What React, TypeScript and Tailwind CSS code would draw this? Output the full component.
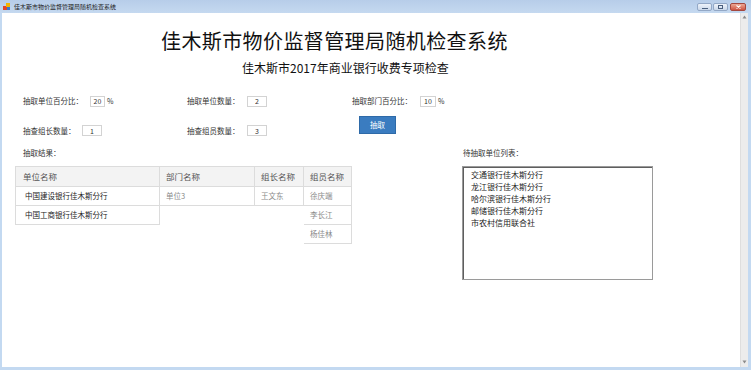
const cjk = "font-['Noto_Sans_CJK_SC',sans-serif]";

function TitleBar() {
  return (
    <div className="h-[13px] flex items-center bg-gradient-to-b from-[#b7cde9] to-[#c5d9f0] relative">
      <svg width="8" height="8" viewBox="0 0 8 8" className="ml-[3px]">
        <rect x="0" y="3" width="4" height="4" fill="#e0452b" />
        <rect x="3" y="0" width="4" height="4" fill="#f4b400" />
        <rect x="4" y="4" width="3" height="3" fill="#3c78c8" />
      </svg>
      <span className="ml-[3px] text-[6px] leading-none text-[#1b1b1b]">佳木斯市物价监督管理局随机检查系统</span>
      <div className="ml-auto mr-[5px] flex items-start gap-[1px] self-start mt-[3px]">
        <div className="w-[15px] h-[8px] rounded-[2px] border border-[#93a8c6] bg-gradient-to-b from-[#eef3fa] to-[#cad8ea] flex items-end justify-center pb-[1px]">
          <div className="w-[6px] h-[1px] bg-[#4a5f7e]" />
        </div>
        <div className="w-[15px] h-[8px] rounded-[2px] border border-[#93a8c6] bg-gradient-to-b from-[#eef3fa] to-[#cad8ea] flex items-center justify-center">
          <div className="w-[5px] h-[4px] border border-[#4a5f7e]" />
        </div>
        <div className="ml-[1px] w-[16px] h-[8px] rounded-[2px] border border-[#a4483f] bg-gradient-to-b from-[#eca896] to-[#cd5242] flex items-center justify-center">
          <svg width="5" height="4" viewBox="0 0 5 4">
            <path d="M0.5 0.5 L4.5 3.5 M4.5 0.5 L0.5 3.5" stroke="#fff" strokeWidth="1.1" />
          </svg>
        </div>
      </div>
    </div>
  );
}

function Scrollbar() {
  return (
    <div className="w-[8px] bg-[#ececec] border-l border-[#dedede] flex flex-col items-center justify-between py-[1px]">
      <svg width="5" height="4" viewBox="0 0 5 4" className="mt-[1px]">
        <path d="M2.5 0.5 L4.5 3.5 L0.5 3.5 Z" fill="#8a8a8a" />
      </svg>
      <svg width="5" height="4" viewBox="0 0 5 4" className="mb-[2px]">
        <path d="M0.5 0.5 L4.5 0.5 L2.5 3.5 Z" fill="#8a8a8a" />
      </svg>
    </div>
  );
}

function Field({ value, w }: { value: string; w: string }) {
  return (
    <input
      readOnly
      value={value}
      className={`${w} h-[11px] border border-[#d3d3d3] text-center text-[7px] leading-none text-[#333] outline-none p-0`}
    />
  );
}

const label = "text-[7.5px] leading-none text-[#333] whitespace-nowrap";

function Col({ title, items, w, first, dark }: { title: string; items: string[]; w: string; first?: boolean; dark?: boolean }) {
  return (
    <div className={`${w} flex flex-col`}>
      <div className={`h-[21px] flex items-center bg-[#f3f3f3] border-t border-b border-r border-[#dcdcdc] ${first ? 'border-l pl-[7px]' : 'pl-[6px]'} text-[8.5px] text-[#555]`}>
        {title}
      </div>
      {items.map((t) => (
        <div
          key={t}
          className={`h-[19px] flex items-center border-b border-r border-[#dcdcdc] ${first ? 'border-l pl-[9px]' : 'pl-[6px]'} text-[7.5px] ${dark ? 'text-[#222]' : 'text-[#8a8a8a]'}`}
        >
          {t}
        </div>
      ))}
    </div>
  );
}

export default function App() {
  const pending = ['交通银行佳木斯分行', '龙江银行佳木斯分行', '哈尔滨银行佳木斯分行', '邮储银行佳木斯分行', '市农村信用联合社'];

  return (
    <div className={`w-[751px] h-[370px] bg-[#c3d9f1] flex flex-col overflow-hidden ${cjk}`}>
      <TitleBar />
      <div className="flex flex-1 pl-[2px] pr-[3px] pb-[3px]">
        <div className="flex-1 bg-white flex flex-col">
          <h1 className="mt-[16px] ml-[159px] text-[20px] leading-[24px] tracking-[0.4px] text-[#111] font-normal">
            佳木斯市物价监督管理局随机检查系统
          </h1>
          <h2 className="mt-[7px] ml-[240px] text-[12px] leading-[16px] text-[#111]">
            佳木斯市2017年商业银行收费专项检查
          </h2>

          <div className="mt-[19px] flex items-center h-[12px] pl-[21px]">
            <div className="w-[164px] flex items-center">
              <span className={`${label} w-[67px]`}>抽取单位百分比：</span>
              <Field value="20" w="w-[15px]" />
              <span className="ml-[2px] text-[7px] text-[#333]">%</span>
            </div>
            <div className="w-[165px] flex items-center">
              <span className={`${label} w-[60px]`}>抽取单位数量：</span>
              <Field value="2" w="w-[20px]" />
            </div>
            <div className="flex items-center">
              <span className={`${label} w-[68px]`}>抽取部门百分比：</span>
              <Field value="10" w="w-[16px]" />
              <span className="ml-[2px] text-[7px] text-[#333]">%</span>
            </div>
          </div>

          <div className="mt-[9px] flex items-start pl-[21px] h-[18px]">
            <div className="w-[164px] flex items-center mt-[9px]">
              <span className={`${label} w-[59px]`}>抽查组长数量：</span>
              <Field value="1" w="w-[20px]" />
            </div>
            <div className="w-[165px] flex items-center mt-[9px]">
              <span className={`${label} w-[60px]`}>抽查组员数量：</span>
              <Field value="3" w="w-[20px]" />
            </div>
            <button className="ml-[7px] w-[37px] h-[18px] bg-[#3a7cc0] border border-[#2e6aa8] text-white text-[7.5px] leading-none">
              抽取
            </button>
          </div>

          <div className="mt-[15px] flex">
            <div className="ml-[13px] w-[447px] flex flex-col">
              <span className={`${label} ml-[8px]`}>抽取结果：</span>
              <div className="mt-[9px] flex items-start">
                <Col title="单位名称" items={['中国建设银行佳木斯分行', '中国工商银行佳木斯分行']} w="w-[145px]" first dark />
                <Col title="部门名称" items={['单位3']} w="w-[95px]" />
                <Col title="组长名称" items={['王文东']} w="w-[49px]" />
                <Col title="组员名称" items={['徐庆端', '李长江', '杨佳林']} w="w-[48px]" />
              </div>
            </div>
            <div className="flex flex-col">
              <span className={`${label} ml-[1px]`}>待抽取单位列表：</span>
              <div className="mt-[9px] w-[191px] h-[114px] border border-[#9a9a9a] shadow-[inset_1px_1px_0_#5e5e5e] pt-[2px] pl-[8px]">
                {pending.map((p) => (
                  <div key={p} className="h-[12px] leading-[12px] text-[8px] text-[#222]">
                    {p}
                  </div>
                ))}
              </div>
            </div>
          </div>
        </div>
        <Scrollbar />
      </div>
    </div>
  );
}
